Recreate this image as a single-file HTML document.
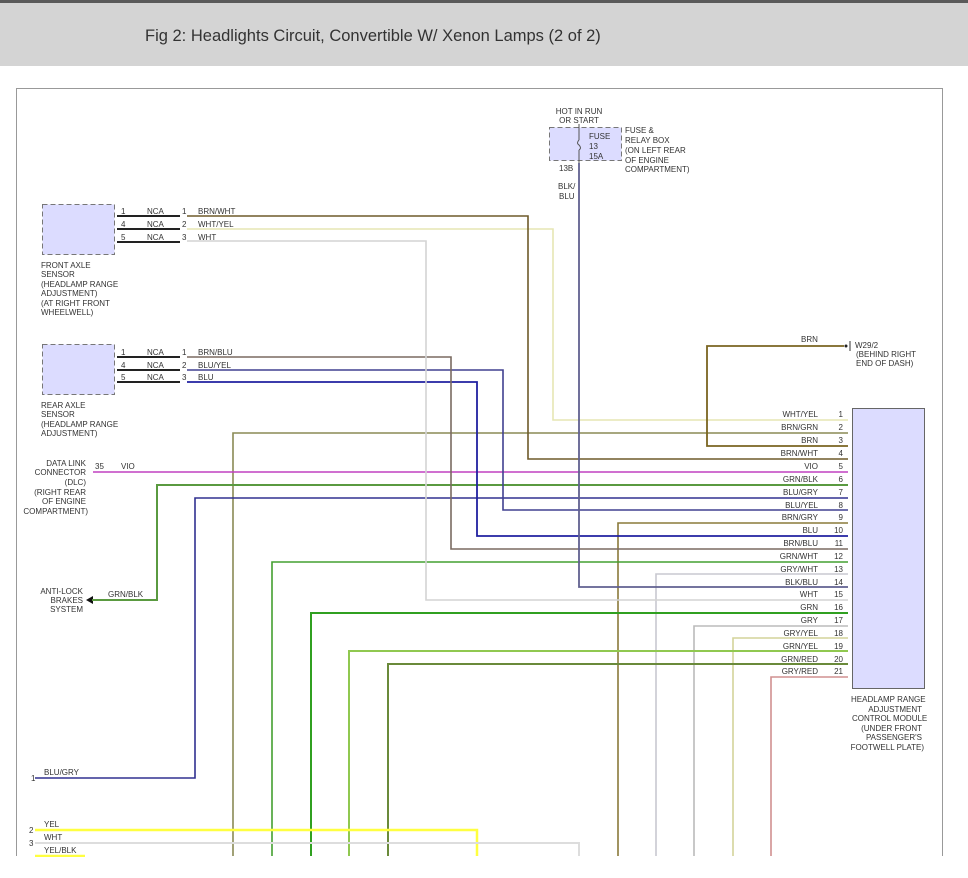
<!DOCTYPE html>
<html><head><meta charset="utf-8"><style>
html,body{margin:0;padding:0;background:#fff;width:968px;height:878px;overflow:hidden}
svg text{font-family:"Liberation Sans",sans-serif;fill:#333}
</style></head><body>
<svg width="968" height="878" viewBox="0 0 968 878" xmlns="http://www.w3.org/2000/svg">
<rect x="0" y="0" width="968" height="66" fill="#d4d4d4"/>
<rect x="0" y="0" width="968" height="3" fill="#5a5a5a"/>
<text x="145" y="41" font-size="16.5" fill="#333" style="fill:#333">Fig 2: Headlights Circuit, Convertible W/ Xenon Lamps (2 of 2)</text>
<!-- frame -->
<path d="M16.5 856 V88.5 H942.5 V856" fill="none" stroke="#999" stroke-width="1"/>

<g font-size="8">
<!-- fuse -->
<text x="579" y="114" text-anchor="middle">HOT IN RUN</text>
<text x="579" y="123" text-anchor="middle">OR START</text>
<rect x="549.5" y="127.5" width="72" height="33" fill="#dcdcff" stroke="#777" stroke-dasharray="5,3"/>
<line x1="579" y1="124" x2="579" y2="140" stroke="#555"/>
<path d="M579 140 q-3 3 0 5 q3 3 0 5" fill="none" stroke="#555"/>
<line x1="579" y1="150" x2="579" y2="163" stroke="#555"/>
<text x="589" y="139">FUSE</text><text x="589" y="149">13</text><text x="589" y="159">15A</text>
<text x="625" y="133">FUSE &amp;</text><text x="625" y="143">RELAY BOX</text><text x="625" y="153">(ON LEFT REAR</text><text x="625" y="163">OF ENGINE</text><text x="625" y="172">COMPARTMENT)</text>
<text x="559" y="171">13B</text><text x="558" y="189">BLK/</text><text x="559" y="199">BLU</text>

<!-- sensors -->
<rect x="42.5" y="204.5" width="72" height="50" fill="#dcdcff" stroke="#777" stroke-dasharray="5,3"/>
<rect x="42.5" y="344.5" width="72" height="50" fill="#dcdcff" stroke="#777" stroke-dasharray="5,3"/>
<g stroke="#222" stroke-width="2">
<line x1="117" y1="216" x2="180" y2="216"/><line x1="117" y1="229" x2="180" y2="229"/><line x1="117" y1="242" x2="180" y2="242"/>
<line x1="117" y1="357" x2="180" y2="357"/><line x1="117" y1="370" x2="180" y2="370"/><line x1="117" y1="382" x2="180" y2="382"/>
</g>
<text x="121" y="214">1</text><text x="121" y="227">4</text><text x="121" y="240">5</text>
<text x="147" y="214">NCA</text><text x="147" y="227">NCA</text><text x="147" y="240">NCA</text>
<text x="182" y="214">1</text><text x="182" y="227">2</text><text x="182" y="240">3</text>
<text x="198" y="214">BRN/WHT</text><text x="198" y="227">WHT/YEL</text><text x="198" y="240">WHT</text>
<text x="121" y="355">1</text><text x="121" y="368">4</text><text x="121" y="380">5</text>
<text x="147" y="355">NCA</text><text x="147" y="368">NCA</text><text x="147" y="380">NCA</text>
<text x="182" y="355">1</text><text x="182" y="368">2</text><text x="182" y="380">3</text>
<text x="198" y="355">BRN/BLU</text><text x="198" y="368">BLU/YEL</text><text x="198" y="380">BLU</text>
<text x="41" y="268">FRONT AXLE</text><text x="41" y="277">SENSOR</text><text x="41" y="287">(HEADLAMP RANGE</text><text x="41" y="296">ADJUSTMENT)</text><text x="41" y="306">(AT RIGHT FRONT</text><text x="41" y="315">WHEELWELL)</text>
<text x="41" y="408">REAR AXLE</text><text x="41" y="417">SENSOR</text><text x="41" y="427">(HEADLAMP RANGE</text><text x="41" y="436">ADJUSTMENT)</text>

<!-- DLC / ABS -->
<g text-anchor="end"><text x="86" y="466">DATA LINK</text><text x="86" y="475">CONNECTOR</text><text x="86" y="485">(DLC)</text><text x="86" y="495">(RIGHT REAR</text><text x="86" y="504">OF ENGINE</text><text x="88" y="514">COMPARTMENT)</text>
<text x="83" y="594">ANTI-LOCK</text><text x="83" y="603">BRAKES</text><text x="83" y="612">SYSTEM</text></g>
<text x="95" y="469">35</text><text x="121" y="469">VIO</text>
<text x="108" y="597">GRN/BLK</text>
<path d="M86 600 l7 -4 v8z" fill="#111"/>

<!-- W29/2 -->
<text x="801" y="342">BRN</text>
<circle cx="846" cy="346" r="1.5" fill="#222"/><line x1="850" y1="341" x2="850" y2="351" stroke="#333"/>
<text x="855" y="348">W29/2</text><text x="856" y="357">(BEHIND RIGHT</text><text x="856" y="366">END OF DASH)</text>

<!-- module -->
<rect x="852.5" y="408.5" width="72" height="280" fill="#dcdcff" stroke="#666"/>
<text x="851" y="702">HEADLAMP RANGE</text><text x="922" y="712" text-anchor="end">ADJUSTMENT</text><text x="852" y="721">CONTROL MODULE</text><text x="922" y="731" text-anchor="end">(UNDER FRONT</text><text x="922" y="740" text-anchor="end">PASSENGER'S</text><text x="924" y="750" text-anchor="end">FOOTWELL PLATE)</text>

<!-- wires -->
<g fill="none" stroke-width="1.6">
<path d="M187 229 H553 V420 H848" stroke="#e6e6b4"/>
<path d="M233 856 V433 H848" stroke="#8a8a55"/>
<path d="M844 346 H707 V446 H848" stroke="#7a6420" stroke-width="1.8"/>
<path d="M187 216 H528 V459 H848" stroke="#6e5a2a"/>
<path d="M93 472 H848" stroke="#c040c0"/>
<path d="M92 600 H157 V485 H848" stroke="#5a9a40" stroke-width="2"/>
<path d="M35 778 H195 V498 H848" stroke="#303090"/>
<path d="M187 370 H503 V510 H848" stroke="#404090"/>
<path d="M618 856 V523 H848" stroke="#8a7a3a"/>
<path d="M187 382 H477 V536 H848" stroke="#2020a0" stroke-width="1.8"/>
<path d="M187 357 H451 V549 H848" stroke="#7a6a60"/>
<path d="M272 856 V562 H848" stroke="#44a030"/>
<path d="M656 856 V574 H848" stroke="#c8c8d0"/>
<path d="M579 163 V587 H848" stroke="#606090" stroke-width="1.8"/>
<path d="M187 241 H426 V600 H848" stroke="#d4d4d4"/>
<path d="M311 856 V613 H848" stroke="#30a020" stroke-width="2"/>
<path d="M694 856 V626 H848" stroke="#bbbbbb"/>
<path d="M733 856 V638 H848" stroke="#d4d49a"/>
<path d="M349 856 V651 H848" stroke="#90c850" stroke-width="2"/>
<path d="M388 856 V664 H848" stroke="#6a8a3a" stroke-width="2"/>
<path d="M771 856 V677 H848" stroke="#d09090"/>
<path d="M35 830 H477 V856" stroke="#ffff40" stroke-width="2.5"/>
<path d="M35 843 H579 V856" stroke="#dddddd" stroke-width="2"/>
<path d="M35 856 H85" stroke="#ffff40" stroke-width="2.5"/>
</g>
<rect x="0" y="857" width="968" height="21" fill="#fff"/>
<text x="31" y="781">1</text><text x="44" y="775">BLU/GRY</text>
<text x="29" y="833">2</text><text x="44" y="827">YEL</text>
<text x="29" y="846">3</text><text x="44" y="840">WHT</text>
<text x="44" y="853">YEL/BLK</text>

<g text-anchor="end">
<text x="818" y="417">WHT/YEL</text><text x="843" y="417">1</text>
<text x="818" y="430">BRN/GRN</text><text x="843" y="430">2</text>
<text x="818" y="443">BRN</text><text x="843" y="443">3</text>
<text x="818" y="456">BRN/WHT</text><text x="843" y="456">4</text>
<text x="818" y="469">VIO</text><text x="843" y="469">5</text>
<text x="818" y="482">GRN/BLK</text><text x="843" y="482">6</text>
<text x="818" y="495">BLU/GRY</text><text x="843" y="495">7</text>
<text x="818" y="508">BLU/YEL</text><text x="843" y="508">8</text>
<text x="818" y="520">BRN/GRY</text><text x="843" y="520">9</text>
<text x="818" y="533">BLU</text><text x="843" y="533">10</text>
<text x="818" y="546">BRN/BLU</text><text x="843" y="546">11</text>
<text x="818" y="559">GRN/WHT</text><text x="843" y="559">12</text>
<text x="818" y="572">GRY/WHT</text><text x="843" y="572">13</text>
<text x="818" y="585">BLK/BLU</text><text x="843" y="585">14</text>
<text x="818" y="597">WHT</text><text x="843" y="597">15</text>
<text x="818" y="610">GRN</text><text x="843" y="610">16</text>
<text x="818" y="623">GRY</text><text x="843" y="623">17</text>
<text x="818" y="636">GRY/YEL</text><text x="843" y="636">18</text>
<text x="818" y="649">GRN/YEL</text><text x="843" y="649">19</text>
<text x="818" y="662">GRN/RED</text><text x="843" y="662">20</text>
<text x="818" y="674">GRY/RED</text><text x="843" y="674">21</text>
</g>
</g>
</svg>
</body></html>
